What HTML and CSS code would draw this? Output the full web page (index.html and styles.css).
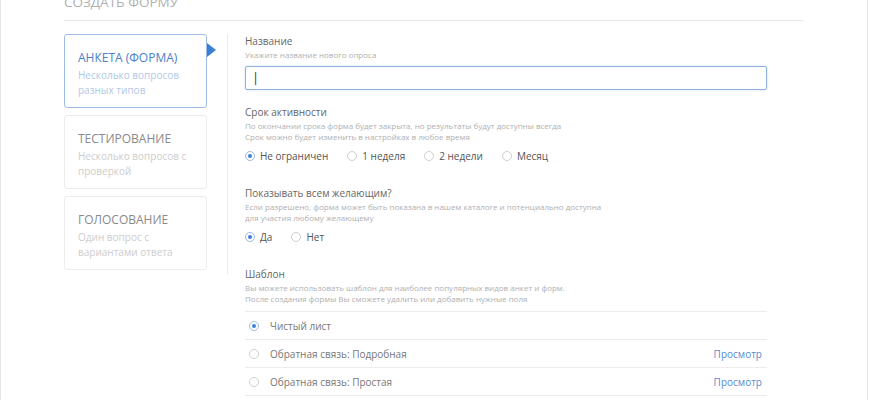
FILE: index.html
```html
<!DOCTYPE html>
<html lang="ru">
<head>
<meta charset="utf-8">
<link rel="stylesheet" href="styles.css">
</head>
<body>
<div class="page">
  <div class="wrap">
    <h1 class="title">Создать форму</h1>
    <div class="main">
      <div class="types">
        <div class="card active">
          <div class="card-title">Анкета (форма)</div>
          <div class="card-sub">Несколько вопросов<br>разных типов</div>
          <span class="arrow"></span>
        </div>
        <div class="card">
          <div class="card-title">Тестирование</div>
          <div class="card-sub">Несколько вопросов с<br>проверкой</div>
        </div>
        <div class="card">
          <div class="card-title">Голосование</div>
          <div class="card-sub">Один вопрос с<br>вариантами ответа</div>
        </div>
      </div>
      <div class="form">
        <div class="field first">
          <div class="label">Название</div>
          <div class="hint">Укажите название нового опроса</div>
          <div class="input"><span class="caret">|</span></div>
        </div>
        <div class="field after-input">
          <div class="label">Срок активности</div>
          <div class="hint">По окончании срока форма будет закрыта, но результаты будут доступны всегда<br>Срок можно будет изменить в настройках в любое время</div>
          <div class="radios">
            <span class="opt"><span class="radio on"></span>Не ограничен</span>
            <span class="opt"><span class="radio"></span>1 неделя</span>
            <span class="opt"><span class="radio"></span>2 недели</span>
            <span class="opt"><span class="radio"></span>Месяц</span>
          </div>
        </div>
        <div class="field">
          <div class="label">Показывать всем желающим?</div>
          <div class="hint">Если разрешено, форма может быть показана в нашем каталоге и потенциально доступна<br>для участия любому желающему</div>
          <div class="radios">
            <span class="opt"><span class="radio on"></span>Да</span>
            <span class="opt"><span class="radio"></span>Нет</span>
          </div>
        </div>
        <div class="field">
          <div class="label">Шаблон</div>
          <div class="hint">Вы можете использовать шаблон для наиболее популярных видов анкет и форм.<br>После создания формы Вы сможете удалить или добавить нужные поля</div>
          <div class="templates">
            <div class="row"><span class="radio on"></span><span class="row-name">Чистый лист</span></div>
            <div class="row"><span class="radio"></span><span class="row-name">Обратная связь: Подробная</span><span class="view">Просмотр</span></div>
            <div class="row"><span class="radio"></span><span class="row-name">Обратная связь: Простая</span><span class="view">Просмотр</span></div>
          </div>
        </div>
      </div>
    </div>
  </div>
</div>
</body>
</html>
```
FILE: styles.css
```css
html, body {
  margin: 0;
  padding: 0;
  background: #fff;
  overflow: hidden;
}
body {
  font-family: "Open Sans", "Liberation Sans", sans-serif;
  color: #666;
}
.page {
  display: flow-root;
  width: 866px;
  height: 400px;
  border-left: 1px solid #e6e6e6;
  border-right: 1px solid #e6e6e6;
}
.wrap {
  padding: 0 63px;
}
.title {
  margin: -8px 0 0 0;
  padding-bottom: 8px;
  font-size: 13.5px;
  line-height: 20px;
  font-weight: 400;
  color: #b0b0b0;
  text-transform: uppercase;
  border-bottom: 1px solid #e8e8e8;
}
.main {
  display: flex;
  align-items: flex-start;
  margin-top: 13px;
}
.types {
  width: 143px;
  padding-right: 20px;
  padding-bottom: 5px;
  border-right: 1px solid #ececec;
  display: flex;
  flex-direction: column;
  gap: 7px;
}
.card {
  position: relative;
  height: 74px;
  box-sizing: border-box;
  border: 1px solid #ececec;
  border-radius: 3px;
  padding: 14px 10px 0 13px;
}
.card.active {
  border-color: #9dbde6;
}
.card-title {
  font-size: 12px;
  line-height: 17px;
  text-transform: uppercase;
  color: #8a8a8a;
}
.card.active .card-title {
  color: #4d80c8;
}
.card-sub {
  margin-top: 2px;
  font-size: 10px;
  line-height: 15px;
  color: #cdcdcd;
}
.card.active .card-sub {
  color: #b2c8e8;
}
.arrow {
  position: absolute;
  right: -10px;
  top: 8px;
  width: 0;
  height: 0;
  border-top: 7px solid transparent;
  border-bottom: 7px solid transparent;
  border-left: 9px solid #3b7fd6;
}
.form {
  width: 522px;
  margin-left: 17px;
}
.field {
  margin-top: 22px;
}
.field.first {
  margin-top: 0;
}
.field.after-input {
  margin-top: 15px;
}
.label {
  font-size: 10px;
  line-height: 14px;
  color: #666;
}
.hint {
  margin-top: 1px;
  font-size: 8px;
  line-height: 11px;
  color: #b0b0b0;
}
.input {
  margin-top: 6px;
  height: 24px;
  box-sizing: border-box;
  border: 1px solid #8fb2df;
  border-radius: 2px;
  box-shadow: 0 0 2px rgba(100, 150, 220, 0.45);
  padding-left: 6px;
  font-size: 13px;
  line-height: 21px;
  color: #333;
}
.radios {
  display: flex;
  gap: 19px;
  margin-top: 6px;
  height: 16px;
  align-items: center;
}
.opt {
  display: flex;
  align-items: center;
  font-size: 10px;
  color: #555;
}
.radio {
  display: inline-block;
  width: 8px;
  height: 8px;
  border: 1px solid #cfcfcf;
  border-radius: 50%;
  margin-right: 5px;
  position: relative;
  flex: none;
  background: #fff;
}
.radio.on {
  border-color: #9cbbe3;
}
.radio.on::after {
  content: "";
  position: absolute;
  left: 2px;
  top: 2px;
  width: 4px;
  height: 4px;
  border-radius: 50%;
  background: #3b7fd6;
}
.templates {
  margin-top: 7px;
  border-top: 1px solid #ececec;
}
.row {
  display: flex;
  align-items: center;
  height: 28px;
  box-sizing: border-box;
  border-bottom: 1px solid #ececec;
  padding: 0 5px 0 4px;
  font-size: 10px;
  color: #777;
}
.row .radio {
  margin-right: 11px;
}
.row-name {
  flex: 1;
}
.view {
  color: #5a8acd;
}
```
